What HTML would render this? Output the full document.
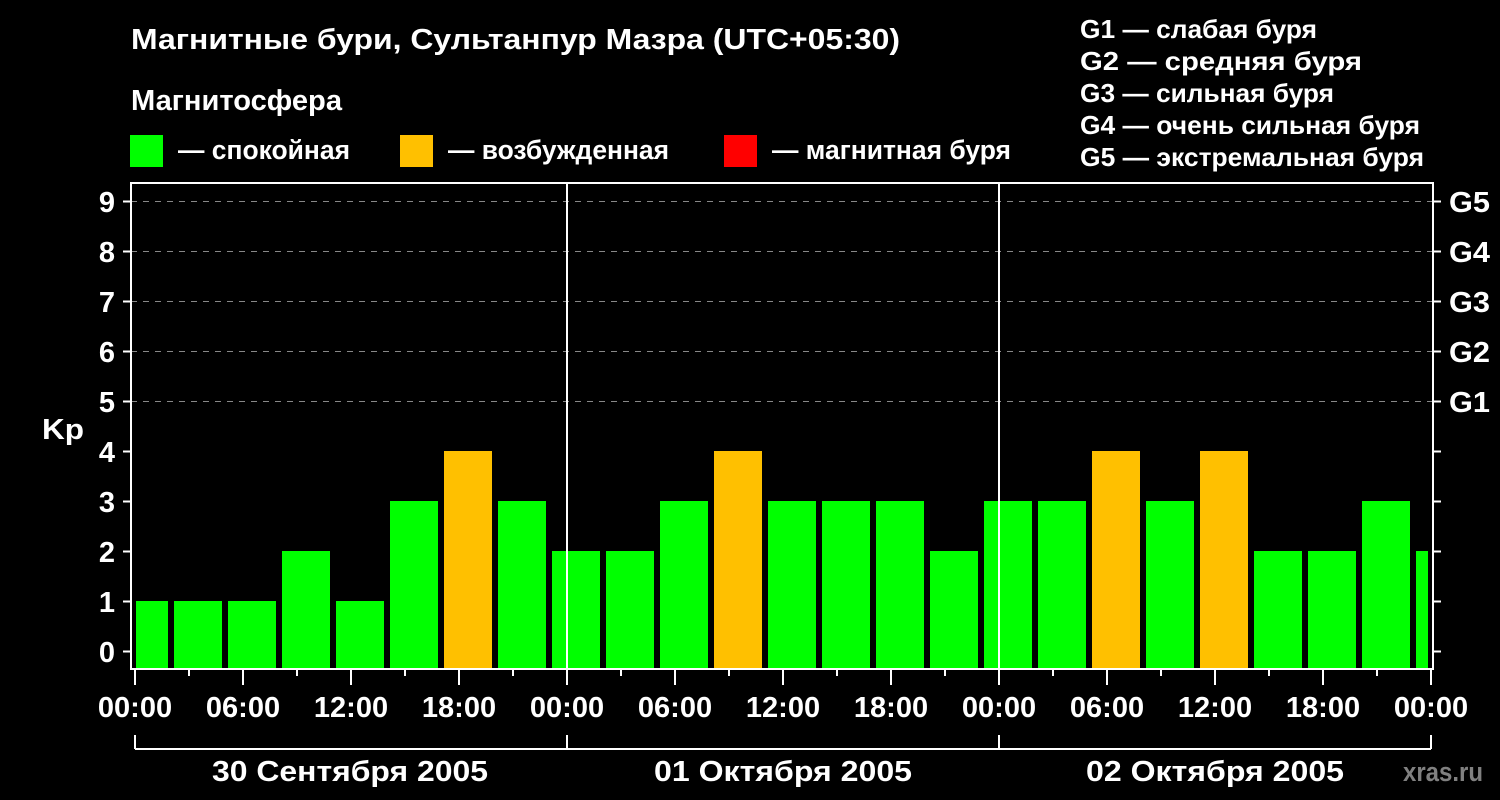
<!DOCTYPE html>
<html><head><meta charset="utf-8"><style>html,body{margin:0;padding:0;background:#000;}svg{display:block}</style></head><body>
<svg width="1500" height="800" xmlns="http://www.w3.org/2000/svg" font-family="Liberation Sans, Arial, sans-serif" font-weight="bold" fill="#fff">
<rect width="1500" height="800" fill="#000"/>
<text x="131" y="49" font-size="29" textLength="769" lengthAdjust="spacingAndGlyphs">Магнитные бури, Сультанпур Мазра (UTC+05:30)</text>
<text x="131" y="110" font-size="29" textLength="211" lengthAdjust="spacingAndGlyphs">Магнитосфера</text>
<rect x="130" y="135" width="33" height="32" fill="#00ff00"/>
<text x="178" y="159" font-size="27" textLength="172" lengthAdjust="spacingAndGlyphs">— спокойная</text>
<rect x="400" y="135" width="33" height="32" fill="#ffc000"/>
<text x="448" y="159" font-size="27" textLength="221" lengthAdjust="spacingAndGlyphs">— возбужденная</text>
<rect x="724" y="135" width="33" height="32" fill="#ff0000"/>
<text x="772" y="159" font-size="27" textLength="239" lengthAdjust="spacingAndGlyphs">— магнитная буря</text>
<g font-size="26">
<text x="1080" y="38" textLength="237" lengthAdjust="spacingAndGlyphs">G1 — слабая буря</text>
<text x="1080" y="70" textLength="282" lengthAdjust="spacingAndGlyphs">G2 — средняя буря</text>
<text x="1080" y="102" textLength="254" lengthAdjust="spacingAndGlyphs">G3 — сильная буря</text>
<text x="1080" y="134" textLength="340" lengthAdjust="spacingAndGlyphs">G4 — очень сильная буря</text>
<text x="1080" y="166" textLength="344" lengthAdjust="spacingAndGlyphs">G5 — экстремальная буря</text>
</g>
<g stroke="#888" stroke-width="1" stroke-dasharray="6,6">
<line x1="131" y1="201.5" x2="1433" y2="201.5"/>
<line x1="131" y1="251.5" x2="1433" y2="251.5"/>
<line x1="131" y1="301.5" x2="1433" y2="301.5"/>
<line x1="131" y1="351.5" x2="1433" y2="351.5"/>
<line x1="131" y1="401.5" x2="1433" y2="401.5"/>
</g>
<g fill="#00ff00">
<rect x="136" y="601" width="32" height="67"/>
<rect x="174" y="601" width="48" height="67"/>
<rect x="228" y="601" width="48" height="67"/>
<rect x="282" y="551" width="48" height="117"/>
<rect x="336" y="601" width="48" height="67"/>
<rect x="390" y="501" width="48" height="167"/>
<rect x="498" y="501" width="48" height="167"/>
<rect x="552" y="551" width="48" height="117"/>
<rect x="606" y="551" width="48" height="117"/>
<rect x="660" y="501" width="48" height="167"/>
<rect x="768" y="501" width="48" height="167"/>
<rect x="822" y="501" width="48" height="167"/>
<rect x="876" y="501" width="48" height="167"/>
<rect x="930" y="551" width="48" height="117"/>
<rect x="984" y="501" width="48" height="167"/>
<rect x="1038" y="501" width="48" height="167"/>
<rect x="1146" y="501" width="48" height="167"/>
<rect x="1254" y="551" width="48" height="117"/>
<rect x="1308" y="551" width="48" height="117"/>
<rect x="1362" y="501" width="48" height="167"/>
<rect x="1416" y="551" width="12" height="117"/>
</g>
<g fill="#ffc000">
<rect x="444" y="451" width="48" height="217"/>
<rect x="714" y="451" width="48" height="217"/>
<rect x="1092" y="451" width="48" height="217"/>
<rect x="1200" y="451" width="48" height="217"/>
</g>
<g stroke="#fff" stroke-width="2" fill="none">
<rect x="131" y="183" width="1302" height="486"/>
<line x1="567" y1="183" x2="567" y2="669"/>
<line x1="999" y1="183" x2="999" y2="669"/>
<path d="M123 201.5h8M123 251.5h8M123 301.5h8M123 351.5h8M123 401.5h8M123 451.5h8M123 501.5h8M123 551.5h8M123 601.5h8M123 651.5h8"/>
<path d="M1433 201.5h8M1433 251.5h8M1433 301.5h8M1433 351.5h8M1433 401.5h8M1433 451.5h8M1433 501.5h8M1433 551.5h8M1433 601.5h8M1433 651.5h8"/>
<path d="M135 669v16M189 669v7M243 669v16M297 669v7M351 669v16M405 669v7M459 669v16M513 669v7M567 669v16M621 669v7M675 669v16M729 669v7M783 669v16M837 669v7M891 669v16M945 669v7M999 669v16M1053 669v7M1107 669v16M1161 669v7M1215 669v16M1269 669v7M1323 669v16M1377 669v7M1431 669v16"/>
<path d="M135 735v14M567 735v14M999 735v14M1431 735v14M135 749H1431"/>
</g>
<g font-size="29" text-anchor="middle">
<text x="107" y="212">9</text><text x="107" y="262">8</text><text x="107" y="312">7</text><text x="107" y="362">6</text><text x="107" y="412">5</text>
<text x="107" y="462">4</text><text x="107" y="512">3</text><text x="107" y="562">2</text><text x="107" y="612">1</text><text x="107" y="662">0</text>
</g>
<g font-size="29">
<text x="1449" y="212" textLength="41" lengthAdjust="spacingAndGlyphs">G5</text><text x="1449" y="262" textLength="41" lengthAdjust="spacingAndGlyphs">G4</text><text x="1449" y="312" textLength="41" lengthAdjust="spacingAndGlyphs">G3</text><text x="1449" y="362" textLength="41" lengthAdjust="spacingAndGlyphs">G2</text><text x="1449" y="412" textLength="41" lengthAdjust="spacingAndGlyphs">G1</text>
<text x="42" y="439" textLength="42" lengthAdjust="spacingAndGlyphs">Kp</text>
</g>
<g font-size="29" text-anchor="middle">
<text x="135" y="717">00:00</text><text x="243" y="717">06:00</text><text x="351" y="717">12:00</text><text x="459" y="717">18:00</text>
<text x="567" y="717">00:00</text><text x="675" y="717">06:00</text><text x="783" y="717">12:00</text><text x="891" y="717">18:00</text>
<text x="999" y="717">00:00</text><text x="1107" y="717">06:00</text><text x="1215" y="717">12:00</text><text x="1323" y="717">18:00</text>
<text x="1431" y="717">00:00</text>
</g>
<g font-size="29">
<text x="212" y="781" textLength="276" lengthAdjust="spacingAndGlyphs">30 Сентября 2005</text>
<text x="654" y="781" textLength="258" lengthAdjust="spacingAndGlyphs">01 Октября 2005</text>
<text x="1086" y="781" textLength="258" lengthAdjust="spacingAndGlyphs">02 Октября 2005</text>
</g>
<text x="1403" y="781" font-size="27" fill="#808080" textLength="80" lengthAdjust="spacingAndGlyphs">xras.ru</text>
</svg>
</body></html>
